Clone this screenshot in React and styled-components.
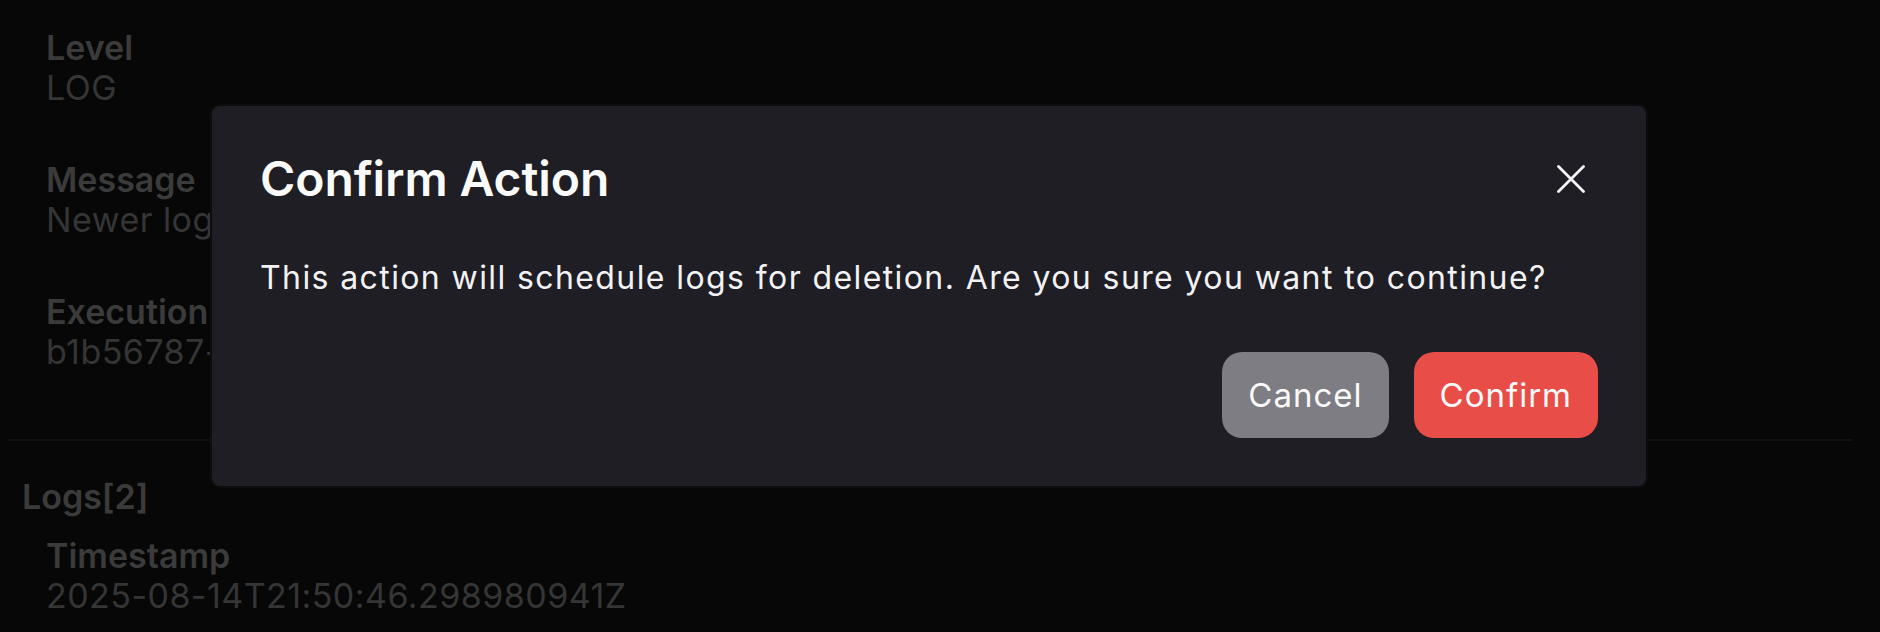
import React from 'react'
import { styled, createGlobalStyle } from 'styled-components'

const GlobalStyle = createGlobalStyle`
  * {
    box-sizing: border-box;
  }
  html, body {
    margin: 0;
    padding: 0;
    background: #070707;
    font-family: Inter, "Noto Sans", sans-serif;
    overflow: hidden;
  }
`

const fields = [
  { label: 'Level', value: 'LOG' },
  { label: 'Message', value: 'Newer logs are kept, older logs are scheduled for deletion' },
  { label: 'Execution ID', value: 'b1b56787-4c2e-4f0a-9d3b-7e21a6c0f512' },
]

function App() {
  return (
    <>
      <GlobalStyle />
      <Page>
        <FieldList>
          {fields.map((f) => (
            <Field key={f.label}>
              <Label>{f.label}</Label>
              <Value>{f.value}</Value>
            </Field>
          ))}
        </FieldList>
        <Divider />
        <SectionTitle>Logs[2]</SectionTitle>
        <FieldList $tight>
          <Field>
            <Label>Timestamp</Label>
            <Value>2025-08-14T21:50:46.298980941Z</Value>
          </Field>
        </FieldList>
      </Page>

      <Overlay>
        <Modal role="dialog" aria-labelledby="confirm-title">
          <ModalHeader>
            <ModalTitle id="confirm-title">Confirm Action</ModalTitle>
            <CloseButton aria-label="Close">
              <svg width="28" height="28" viewBox="0 0 28 28" fill="none">
                <path d="M1.5 1.5 26.5 26.5M26.5 1.5 1.5 26.5" stroke="#f5f5f7" strokeWidth="2.8" strokeLinecap="round" />
              </svg>
            </CloseButton>
          </ModalHeader>
          <ModalBody>
            This action will schedule logs for deletion. Are you sure you want to continue?
          </ModalBody>
          <ModalFooter>
            <Button $variant="cancel">Cancel</Button>
            <Button $variant="danger">Confirm</Button>
          </ModalFooter>
        </Modal>
      </Overlay>
    </>
  )
}

const Page = styled.div`
  width: 100%;
  height: 632px;
  padding: 28px 28px 0 8px;
  display: flex;
  flex-direction: column;
`

const FieldList = styled.div`
  display: flex;
  flex-direction: column;
  gap: 52px;
  padding-left: 38px;
  margin-top: ${(p) => (p.$tight ? '19px' : '0')};
`

const Field = styled.div`
  display: flex;
  flex-direction: column;
`

const Label = styled.div`
  font-size: 34px;
  line-height: 40px;
  font-weight: 600;
  color: #3b3b3c;
  white-space: nowrap;
`

const Value = styled.div`
  font-size: 34px;
  line-height: 40px;
  font-weight: 400;
  letter-spacing: 0.45px;
  color: #353536;
  white-space: nowrap;
`

const Divider = styled.div`
  height: 2px;
  background: #101010;
  margin-top: 67px;
`

const SectionTitle = styled.div`
  margin-top: 36px;
  padding-left: 14px;
  font-size: 34px;
  line-height: 40px;
  font-weight: 600;
  color: #3b3b3c;
`

const Overlay = styled.div`
  position: fixed;
  inset: 0;
  display: flex;
  align-items: flex-start;
  padding: 104px 0 0 210px;
`

const Modal = styled.div`
  width: 1438px;
  background: #1f1e24;
  border: 2px solid #0d0d0f;
  border-radius: 10px;
  padding: 48px;
  display: flex;
  flex-direction: column;
`

const ModalHeader = styled.div`
  display: flex;
  align-items: center;
  justify-content: space-between;
`

const ModalTitle = styled.h2`
  margin: 0;
  font-size: 48px;
  line-height: 50px;
  font-weight: 600;
  color: #fafafa;
  letter-spacing: -0.1px;
`

const CloseButton = styled.button`
  width: 54px;
  height: 54px;
  margin: -2px 0;
  display: flex;
  align-items: center;
  justify-content: center;
  background: transparent;
  border: none;
  padding: 0;
  cursor: pointer;
`

const ModalBody = styled.p`
  margin: 50px 0 0;
  font-size: 32px;
  line-height: 48px;
  letter-spacing: 1.4px;
  color: #f2f2f4;
`

const ModalFooter = styled.div`
  display: flex;
  justify-content: flex-end;
  gap: 25px;
  margin-top: 50px;
`

const Button = styled.button`
  height: 86px;
  padding: 0 26px;
  border: none;
  border-radius: 20px;
  font-family: Inter, "Noto Sans", sans-serif;
  font-size: 33px;
  font-weight: 400;
  letter-spacing: 1px;
  color: #fafafa;
  background: ${(p) => (p.$variant === 'danger' ? '#e84e47' : '#7e7d83')};
  cursor: pointer;
`

export default App
